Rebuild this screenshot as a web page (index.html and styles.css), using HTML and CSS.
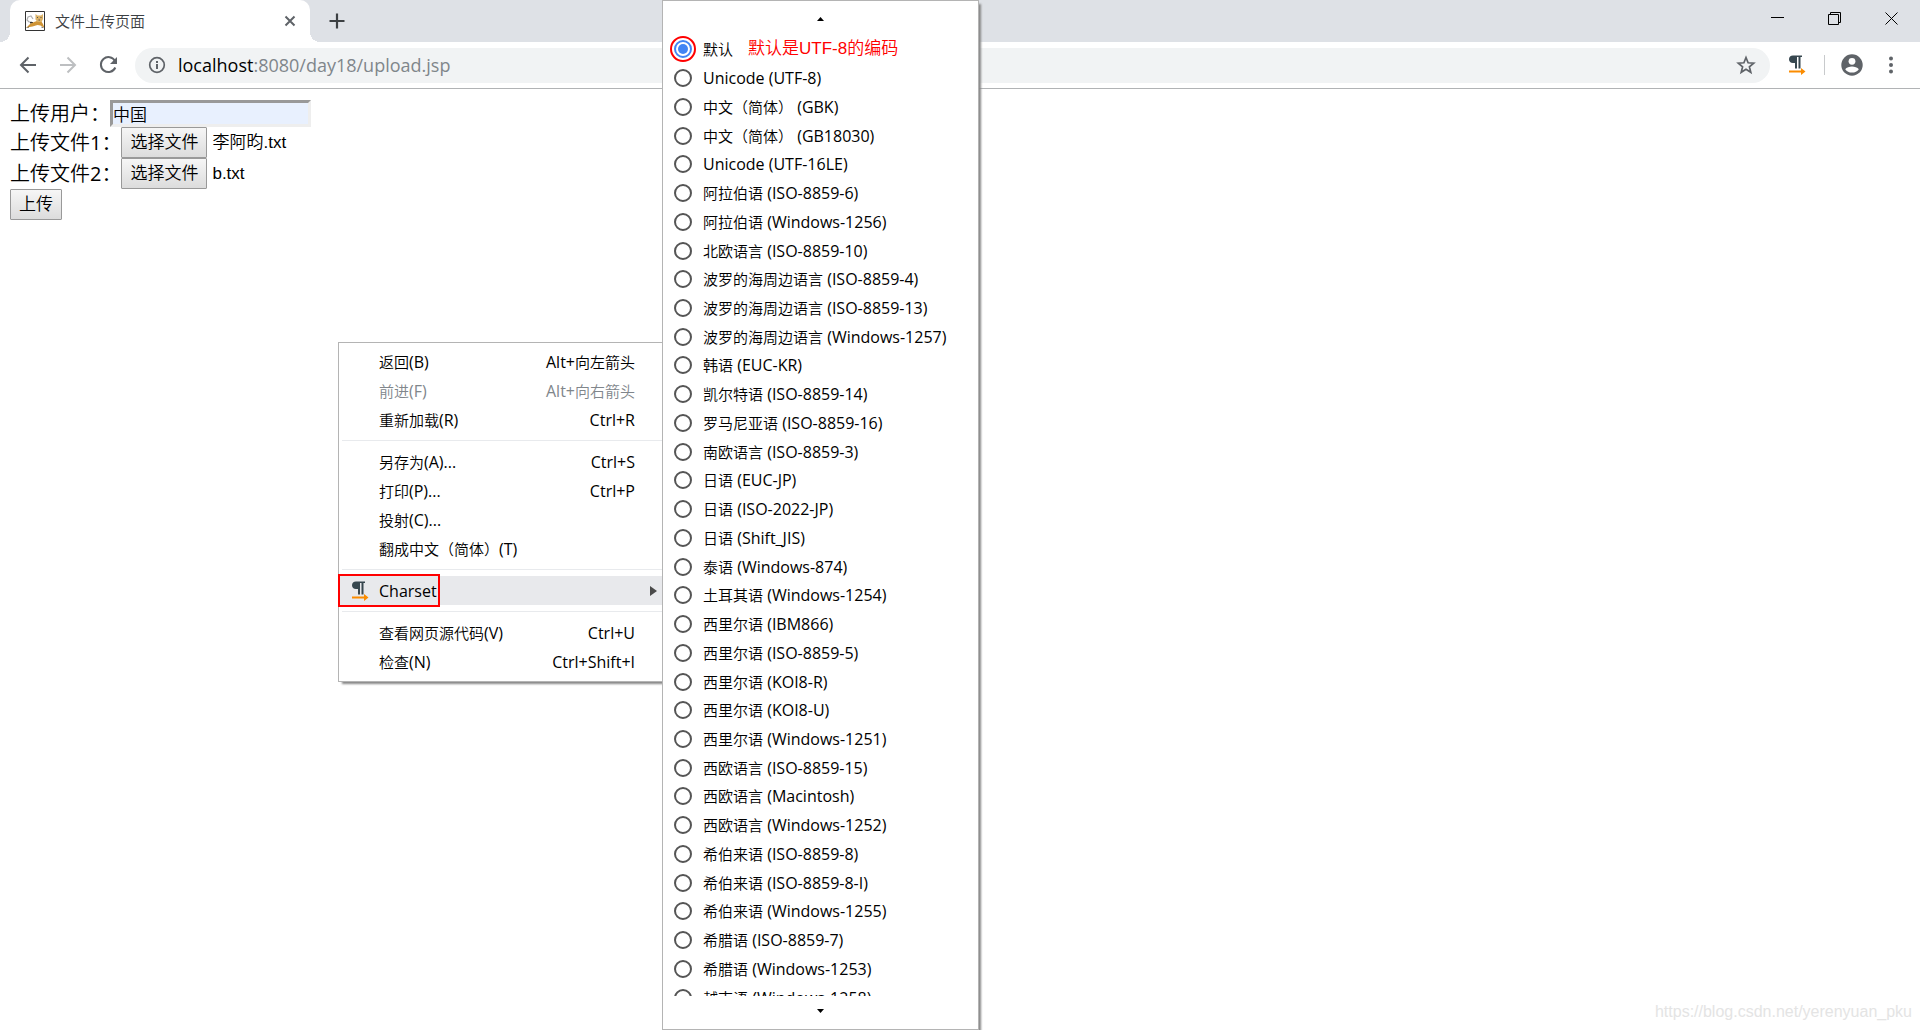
FILE: index.html
```html
<!DOCTYPE html>
<html lang="zh-CN">
<head>
<meta charset="utf-8">
<title>文件上传页面</title>
<link rel="stylesheet" href="styles.css">
</head>
<body>
<svg class="defs" aria-hidden="true">
  <symbol id="pilcrow" viewBox="0 0 24 24">
    <path fill="#37474f" d="M8 2.500h9V4h-1.500v11.500h-2V4h-1.500v11.500H10V10H8C5.500 10 4 8.500 4 6.200S5.500 2.500 8 2.500z"/>
    <path fill="#fb8c00" d="M4 17.500h12V15l4.500 3.500L16 22v-2.500H4z"/>
  </symbol>
</svg>

<header class="browser">
  <div class="tab-strip">
    <div class="tab">
      <svg class="favicon" viewBox="0 0 20 20">
        <path fill="#fff" d="M0 0h20v20H0z"/>
        <path fill="none" stroke="#b0b0b0" stroke-width="1.200" d="M7 11L4 11l-2-2 1-3 3-1 2 3"/>
        <path fill="#333" d="M5 11h3v1.500H5z"/>
        <path fill="#cf9436" d="M1 17l4-4 4-2 3-1h4l2 3 1.500 4-4-2.500-3-.5-5 1.500-3 .5z"/>
        <path fill="#dcb266" d="M10.500 3l2 1.500h3.500L18 3v5l-1.500 3h-4l-2-2.500z"/>
        <path fill="#555" d="M12 6h1v1h-1zM15.500 6h1v1h-1zM13.500 8.500h1.500v1h-1.500zM1 17l3-1.500v1zM16 15.500l3 1.500-2 0z"/>
        <path fill="none" stroke="#333" d="M.5.5h19v19H.5z"/>
      </svg>
      <span class="tab-title">文件上传页面</span>
      <button class="icon-btn tab-close" aria-label="关闭标签页"><svg width="12" height="12" viewBox="0 0 12 12"><path d="M1.500 1.500l9 9M10.500 1.500l-9 9" stroke="#5f6368" stroke-width="2"/></svg></button>
    </div>
    <button class="icon-btn new-tab" aria-label="打开新的标签页"><svg width="16" height="16" viewBox="0 0 16 16"><path d="M8 .5v15M.5 8h15" stroke="#3c4043" stroke-width="2.200"/></svg></button>
    <div class="window-controls">
      <button class="icon-btn" aria-label="最小化"><svg width="13" height="13" viewBox="0 0 13 13"><path d="M0 5.500h13" stroke="#000"/></svg></button>
      <button class="icon-btn" aria-label="还原"><svg width="13" height="13" viewBox="0 0 13 13"><path d="M.5 2.500h10v10H.5zM2.500 2.500v-2h10v10h-2" fill="none" stroke="#000"/></svg></button>
      <button class="icon-btn" aria-label="关闭"><svg width="13" height="13" viewBox="0 0 13 13"><path d="M.5.5l12 12M12.500.5l-12 12" stroke="#000"/></svg></button>
    </div>
  </div>
  <div class="toolbar">
    <nav class="nav">
      <button class="icon-btn" aria-label="后退"><svg width="24" height="24" viewBox="0 0 24 24"><path d="M20 12H5M12.500 4.500L5 12l7.500 7.500" fill="none" stroke="#5f6368" stroke-width="2"/></svg></button>
      <button class="icon-btn" aria-label="前进" disabled><svg width="24" height="24" viewBox="0 0 24 24"><path d="M4 12h15M11.500 4.500L19 12l-7.500 7.500" fill="none" stroke="#bdbfc1" stroke-width="2"/></svg></button>
      <button class="icon-btn" aria-label="重新加载"><svg width="24" height="24" viewBox="0 0 24 24"><path d="M19 8A7.500 7.500 0 1 0 19.300 14.500" fill="none" stroke="#5f6368" stroke-width="2"/><path d="M21 4v7h-7z" fill="#5f6368"/></svg></button>
    </nav>
    <div class="omnibox">
      <svg width="20" height="20" viewBox="0 0 20 20"><circle cx="10" cy="10" r="7.300" fill="none" stroke="#5f6368" stroke-width="1.700"/><path d="M9 9h2v5H9zM9 6h2v2H9z" fill="#5f6368"/></svg>
      <span class="url"><span class="host">localhost</span>:8080/day18/upload.jsp</span>
      <button class="icon-btn" aria-label="收藏"><svg width="20" height="20" viewBox="0 0 20 20"><path d="M10 2.500l2.100 5.300 5.600.4-4.300 3.600 1.400 5.500-4.800-3-4.800 3 1.400-5.500-4.300-3.600 5.600-.4z" fill="none" stroke="#5f6368" stroke-width="1.700"/></svg></button>
    </div>
    <button class="icon-btn" aria-label="Charset"><svg width="24" height="24"><use href="#pilcrow"/></svg></button>
    <span class="divider"></span>
    <button class="icon-btn" aria-label="用户"><svg width="24" height="24" viewBox="0 0 24 24"><circle cx="12" cy="12" r="10.700" fill="#5f6368"/><circle cx="12" cy="8.300" r="3.400" fill="#fff"/><path d="M5.200 16.200C6.500 14.300 9.500 13.500 12 13.500s5.500.8 6.800 2.700C17.300 18.300 14.800 19.600 12 19.600s-5.300-1.300-6.800-3.400z" fill="#fff"/></svg></button>
    <button class="icon-btn" aria-label="菜单"><svg width="24" height="24" viewBox="0 0 24 24" fill="#5f6368"><circle cx="12" cy="5.500" r="2"/><circle cx="12" cy="12" r="2"/><circle cx="12" cy="18.500" r="2"/></svg></button>
  </div>
</header>

<main class="page">
  <form class="upload">
    <div class="field"><label for="user">上传用户：</label><input class="text" id="user" type="text" value="中国"></div>
    <div class="field"><label for="file1">上传文件1：</label><button class="push" id="file1" type="button">选择文件</button><span class="file-name">李阿昀.txt</span></div>
    <div class="field"><label for="file2">上传文件2：</label><button class="push" id="file2" type="button">选择文件</button><span class="file-name">b.txt</span></div>
    <div class="field"><button class="push" type="button">上传</button></div>
  </form>
</main>

<div class="menu context-menu">
  <button class="item"><span>返回<span class="en">(B)</span></span><span><span class="en">Alt+</span>向左箭头</span></button>
  <button class="item" disabled><span>前进<span class="en">(F)</span></span><span><span class="en">Alt+</span>向右箭头</span></button>
  <button class="item"><span>重新加载<span class="en">(R)</span></span><span class="en">Ctrl+R</span></button>
  <hr class="rule">
  <button class="item"><span>另存为<span class="en">(A)...</span></span><span class="en">Ctrl+S</span></button>
  <button class="item"><span>打印<span class="en">(P)...</span></span><span class="en">Ctrl+P</span></button>
  <button class="item"><span>投射<span class="en">(C)...</span></span></button>
  <button class="item"><span>翻成中文（简体）<span class="en">(T)</span></span></button>
  <hr class="rule">
  <button class="item selected"><svg class="item-icon" width="24" height="24"><use href="#pilcrow"/></svg><span class="en">Charset</span><svg class="item-arrow" width="7" height="10" viewBox="0 0 7 10"><path d="M0 0l7 5-7 5z" fill="#4a4a4a"/></svg></button>
  <hr class="rule">
  <button class="item"><span>查看网页源代码<span class="en">(V)</span></span><span class="en">Ctrl+U</span></button>
  <button class="item"><span>检查<span class="en">(N)</span></span><span class="en">Ctrl+Shift+I</span></button>
</div>

<div class="menu charset-menu">
  <button class="scroll" aria-label="向上滚动"><svg width="7" height="4" viewBox="0 0 7 4"><path d="M0 4l3.500-4L7 4z"/></svg></button>
  <div class="viewport">
    <div class="charsets">
      <label class="charset marked"><input type="radio" name="charset" checked><span>默认</span><strong class="note">默认是UTF-8的编码</strong></label>
      <label class="charset"><input type="radio" name="charset"><span class="en">Unicode (UTF-8)</span></label>
      <label class="charset"><input type="radio" name="charset"><span>中文（简体）<span class="en"> (GBK)</span></span></label>
      <label class="charset"><input type="radio" name="charset"><span>中文（简体）<span class="en"> (GB18030)</span></span></label>
      <label class="charset"><input type="radio" name="charset"><span class="en">Unicode (UTF-16LE)</span></label>
      <label class="charset"><input type="radio" name="charset"><span>阿拉伯语<span class="en"> (ISO-8859-6)</span></span></label>
      <label class="charset"><input type="radio" name="charset"><span>阿拉伯语<span class="en"> (Windows-1256)</span></span></label>
      <label class="charset"><input type="radio" name="charset"><span>北欧语言<span class="en"> (ISO-8859-10)</span></span></label>
      <label class="charset"><input type="radio" name="charset"><span>波罗的海周边语言<span class="en"> (ISO-8859-4)</span></span></label>
      <label class="charset"><input type="radio" name="charset"><span>波罗的海周边语言<span class="en"> (ISO-8859-13)</span></span></label>
      <label class="charset"><input type="radio" name="charset"><span>波罗的海周边语言<span class="en"> (Windows-1257)</span></span></label>
      <label class="charset"><input type="radio" name="charset"><span>韩语<span class="en"> (EUC-KR)</span></span></label>
      <label class="charset"><input type="radio" name="charset"><span>凯尔特语<span class="en"> (ISO-8859-14)</span></span></label>
      <label class="charset"><input type="radio" name="charset"><span>罗马尼亚语<span class="en"> (ISO-8859-16)</span></span></label>
      <label class="charset"><input type="radio" name="charset"><span>南欧语言<span class="en"> (ISO-8859-3)</span></span></label>
      <label class="charset"><input type="radio" name="charset"><span>日语<span class="en"> (EUC-JP)</span></span></label>
      <label class="charset"><input type="radio" name="charset"><span>日语<span class="en"> (ISO-2022-JP)</span></span></label>
      <label class="charset"><input type="radio" name="charset"><span>日语<span class="en"> (Shift_JIS)</span></span></label>
      <label class="charset"><input type="radio" name="charset"><span>泰语<span class="en"> (Windows-874)</span></span></label>
      <label class="charset"><input type="radio" name="charset"><span>土耳其语<span class="en"> (Windows-1254)</span></span></label>
      <label class="charset"><input type="radio" name="charset"><span>西里尔语<span class="en"> (IBM866)</span></span></label>
      <label class="charset"><input type="radio" name="charset"><span>西里尔语<span class="en"> (ISO-8859-5)</span></span></label>
      <label class="charset"><input type="radio" name="charset"><span>西里尔语<span class="en"> (KOI8-R)</span></span></label>
      <label class="charset"><input type="radio" name="charset"><span>西里尔语<span class="en"> (KOI8-U)</span></span></label>
      <label class="charset"><input type="radio" name="charset"><span>西里尔语<span class="en"> (Windows-1251)</span></span></label>
      <label class="charset"><input type="radio" name="charset"><span>西欧语言<span class="en"> (ISO-8859-15)</span></span></label>
      <label class="charset"><input type="radio" name="charset"><span>西欧语言<span class="en"> (Macintosh)</span></span></label>
      <label class="charset"><input type="radio" name="charset"><span>西欧语言<span class="en"> (Windows-1252)</span></span></label>
      <label class="charset"><input type="radio" name="charset"><span>希伯来语<span class="en"> (ISO-8859-8)</span></span></label>
      <label class="charset"><input type="radio" name="charset"><span>希伯来语<span class="en"> (ISO-8859-8-I)</span></span></label>
      <label class="charset"><input type="radio" name="charset"><span>希伯来语<span class="en"> (Windows-1255)</span></span></label>
      <label class="charset"><input type="radio" name="charset"><span>希腊语<span class="en"> (ISO-8859-7)</span></span></label>
      <label class="charset"><input type="radio" name="charset"><span>希腊语<span class="en"> (Windows-1253)</span></span></label>
      <label class="charset"><input type="radio" name="charset"><span>越南语<span class="en"> (Windows-1258)</span></span></label>
    </div>
  </div>
  <button class="scroll" aria-label="向下滚动"><svg width="7" height="4" viewBox="0 0 7 4"><path d="M0 0l3.500 4L7 0z"/></svg></button>
</div>

<div class="watermark">https://blog.csdn.net/yerenyuan_pku</div>
</body>
</html>
```
FILE: styles.css
```css
*,
*::before,
*::after { box-sizing: border-box; }

body {
  margin: 0;
  min-height: 100vh;
  position: relative;
  overflow: hidden;
  background: #fff;
  color: #000;
  font-family: "Open Sans", "Noto Sans CJK SC DemiLight", "Noto Sans CJK SC", sans-serif;
  font-size: 15px;
}

button { font: inherit; color: inherit; }
svg { display: block; flex: none; }
.defs { position: absolute; width: 0; height: 0; }

.icon-btn {
  display: flex;
  align-items: center;
  justify-content: center;
  padding: 0;
  border: 0;
  background: none;
}

/* Tab strip */
.tab-strip {
  display: flex;
  height: 42px;
  padding-left: 10px;
  background: #dee1e6;
}
.tab {
  position: relative;
  display: flex;
  align-items: center;
  width: 300px;
  padding: 0 14px 0 15px;
  border-radius: 10px 10px 0 0;
  background: #fff;
}
.tab::before,
.tab::after {
  content: "";
  position: absolute;
  bottom: 0;
  width: 10px;
  height: 10px;
}
.tab::before { right: 100%; background: radial-gradient(circle at 0 0, #dee1e6 10px, #fff 10px); }
.tab::after { left: 100%; background: radial-gradient(circle at 100% 0, #dee1e6 10px, #fff 10px); }
.favicon { width: 20px; height: 20px; }
.tab-title { flex: 1; padding-left: 10px; color: #3c4043; line-height: 20px; }
.new-tab { width: 54px; }
.window-controls { display: flex; height: 37px; margin-left: auto; }
.window-controls .icon-btn { width: 57px; }

/* Toolbar */
.toolbar {
  display: flex;
  align-items: center;
  gap: 15px;
  height: 47px;
  padding: 0 17px 0 16px;
  border-bottom: 1px solid #b1b3b5;
}
.nav { display: flex; gap: 16px; }
.omnibox {
  flex: 1;
  display: flex;
  align-items: center;
  height: 35px;
  padding: 0 14px 0 12px;
  border-radius: 18px;
  background: #f1f3f4;
}
.url { flex: 1; padding-left: 11px; font-size: 18px; line-height: 24px; color: #80868b; }
.host { color: #000; }
.divider { width: 1px; height: 20px; background: #c8cacc; }

/* Upload form */
.page { padding: 11px 10px; }
.upload { font-size: 20px; line-height: 27px; }
.field { display: flex; align-items: center; height: 31px; }
.field:first-child { height: 27px; }
.text {
  width: 201px;
  height: 27px;
  padding: 0;
  border: 3px solid;
  border-color: #999 #eee #eee #999;
  background: #e8f0fe;
  font: 17px/20px "Liberation Sans", "Noto Sans CJK SC DemiLight", "Noto Sans CJK SC", sans-serif;
}
.push {
  height: 31px;
  padding: 0 8px;
  border: 1px solid #999;
  border-radius: 1px;
  background: linear-gradient(#f6f6f6, #dcdcdc);
  font: 17px/24px "Liberation Sans", "Noto Sans CJK SC DemiLight", "Noto Sans CJK SC", sans-serif;
}
.file-name {
  padding-left: 5px;
  font: 17px/24px "Liberation Sans", "Noto Sans CJK SC DemiLight", "Noto Sans CJK SC", sans-serif;
}

/* Menus */
.menu {
  position: absolute;
  border: 1px solid #b4b4b4;
  background: #fff;
}
.en { font-size: 16px; }

.context-menu {
  top: 342px;
  left: 338px;
  width: 326px;
  padding: 4px 0 5px;
  box-shadow: 3px 3px 2px -1px #888;
}
.item {
  display: flex;
  align-items: center;
  justify-content: space-between;
  width: 100%;
  height: 29px;
  padding: 0 28px 0 40px;
  border: 0;
  background: none;
  line-height: 20px;
  white-space: pre;
}
.item:disabled { color: #80868b; }
.rule { margin: 6px 1px 6px 3px; border: 0; border-top: 1px solid #e8eaed; }
.item.selected {
  position: relative;
  padding: 0 6px 0 9px;
  background: #e8e9ec;
}
.item-icon { margin-right: 7px; }
.item-arrow { margin-left: auto; }
.item.selected::after {
  content: "";
  position: absolute;
  top: -2px;
  left: -1px;
  width: 102px;
  height: 33px;
  border: 2px solid #f00;
}

.charset-menu {
  top: 0;
  left: 662px;
  display: flex;
  flex-direction: column;
  width: 317px;
  height: 100vh;
  box-shadow: 3px 3px 2px -1px #888;
}
.scroll {
  display: flex;
  align-items: center;
  justify-content: center;
  flex: none;
  height: 34px;
  padding: 2px 0 0;
  border: 0;
  background: none;
}
.scroll:last-child { height: 33px; padding: 0 0 3px; }
.viewport { flex: 1; min-height: 0; overflow: hidden; }
.charsets { display: grid; grid-auto-rows: 1fr; height: 977px; }
.charset {
  position: relative;
  display: flex;
  align-items: center;
  gap: 11px;
  padding-left: 11px;
  line-height: 20px;
  white-space: pre;
}
.charset input {
  appearance: none;
  display: grid;
  place-items: center;
  width: 18px;
  height: 18px;
  margin: 0;
  border: 2px solid #555;
  border-radius: 50%;
}
.charset input:checked { border-color: #4285f4; }
.charset input:checked::before {
  content: "";
  width: 10px;
  height: 10px;
  border-radius: 50%;
  background: #4285f4;
}
.marked::before {
  content: "";
  position: absolute;
  left: 7px;
  width: 26px;
  height: 26px;
  border: 2px solid #f00;
  border-radius: 50%;
}
.note {
  padding-left: 4px;
  color: #f00;
  font: 17px/20px "Liberation Sans", "Noto Sans CJK SC DemiLight", "Noto Sans CJK SC", sans-serif;
}

.watermark {
  position: absolute;
  right: 8px;
  bottom: 8px;
  color: #e4e4e4;
  font: 16px/20px "Liberation Sans", sans-serif;
}
```
